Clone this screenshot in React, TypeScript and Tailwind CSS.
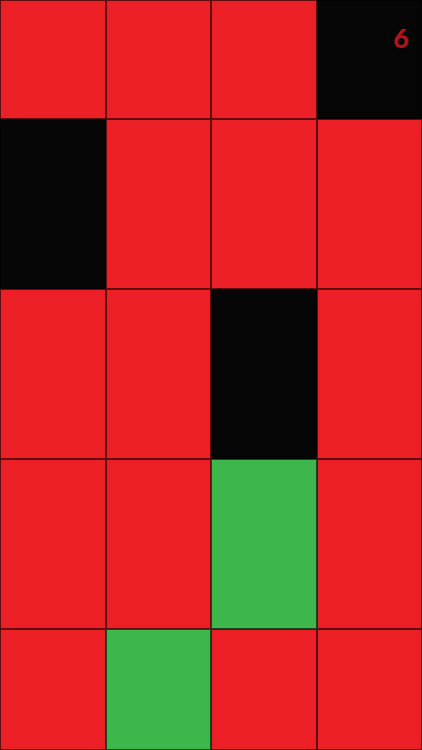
import React from "react";

const R = "bg-[#ed1f26]";
const K = "bg-[#050505]";
const G = "bg-[#3db64b]";

const rows: string[][] = [
  [R, R, R, K],
  [K, R, R, R],
  [R, R, K, R],
  [R, R, G, R],
  [R, G, R, R],
];

export default function App() {
  return (
    <div className="relative w-[422px] h-[750px] overflow-hidden bg-black">
      <div className="grid grid-cols-4 grid-rows-[119px_170px_170px_170px_121px] w-full h-full">
        {rows.flatMap((row, i) =>
          row.map((c, j) => (
            <div key={`${i}-${j}`} className={`${c} border border-black/60`} />
          ))
        )}
      </div>
      <div
        className="absolute top-[24px] right-[13px] text-[27px] font-black text-[#b5121a] leading-none"
        style={{ fontFamily: '"Lato", "Noto Sans", sans-serif' }}
      >
        6
      </div>
    </div>
  );
}
